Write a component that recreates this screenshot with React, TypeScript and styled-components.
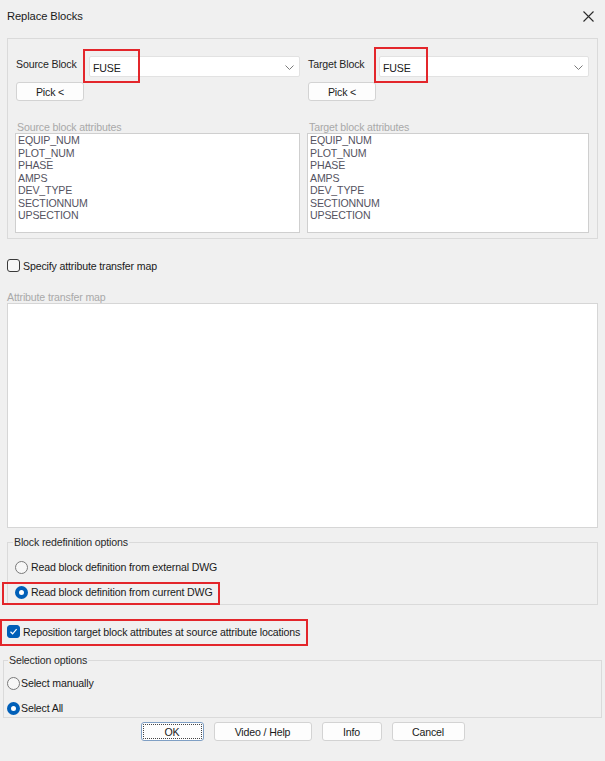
import styled, { createGlobalStyle } from 'styled-components';

const GlobalStyle = createGlobalStyle`
  html, body {
    margin: 0;
    padding: 0;
    background: #f0f0f0;
  }
  body {
    font-family: "Liberation Sans", Arial, sans-serif;
    font-size: 10.6px;
    letter-spacing: -0.15px;
    color: #1a1a1a;
  }
  * {
    box-sizing: border-box;
  }
`;

const sourceAttrs = [
  'EQUIP_NUM',
  'PLOT_NUM',
  'PHASE',
  'AMPS',
  'DEV_TYPE',
  'SECTIONNUM',
  'UPSECTION',
];

export default function App() {
  return (
    <Dialog>
      <GlobalStyle />
      <TitleBar>
        <Title>Replace Blocks</Title>
        <CloseBut aria-label="Close">
          <svg width="11" height="11" viewBox="0 0 11 11">
            <path d="M0.5 0.5 L10.5 10.5 M10.5 0.5 L0.5 10.5" stroke="#2b2b2b" strokeWidth="1.1" />
          </svg>
        </CloseBut>
      </TitleBar>

      <Body>
        <TopGroup>
          <BlockColumn>
            <ComboRow>
              <FieldLabel $w={62}>Source Block</FieldLabel>
              <ComboWrap>
                <Combo>
                  <span>FUSE</span>
                  <Chevron />
                </Combo>
                <RedMark $left={-6} $top={-7} $w={57} $h={34} />
              </ComboWrap>
            </ComboRow>
            <PickBut>Pick &lt;</PickBut>
            <GrayLabel>Source block attributes</GrayLabel>
            <AttrList>
              {sourceAttrs.map((a) => (
                <AttrItem key={a}>{a}</AttrItem>
              ))}
            </AttrList>
          </BlockColumn>

          <BlockColumn>
            <ComboRow>
              <FieldLabel $w={60}>Target Block</FieldLabel>
              <ComboWrap>
                <Combo>
                  <span>FUSE</span>
                  <Chevron />
                </Combo>
                <RedMark $left={-5} $top={-9} $w={54} $h={36} />
              </ComboWrap>
            </ComboRow>
            <PickBut>Pick &lt;</PickBut>
            <GrayLabel>Target block attributes</GrayLabel>
            <AttrList>
              {sourceAttrs.map((a) => (
                <AttrItem key={a}>{a}</AttrItem>
              ))}
            </AttrList>
          </BlockColumn>
        </TopGroup>

        <CheckRow $top={20}>
          <CheckBox />
          <span>Specify attribute transfer map</span>
        </CheckRow>

        <MapLabel>Attribute transfer map</MapLabel>
        <MapBox />

        <RedefGroup>
          <Legend>Block redefinition options</Legend>
          <OptionRow>
            <Radio />
            <span>Read block definition from external DWG</span>
          </OptionRow>
          <OptionRow>
            <Radio $on />
            <span>Read block definition from current DWG</span>
            <RedMark $left={-13} $top={-3} $w={218} $h={23} />
          </OptionRow>
        </RedefGroup>

        <CheckRow $top={20}>
          <CheckBox $on>
            <svg width="9" height="9" viewBox="0 0 9 9">
              <path d="M1.5 4.8 L3.6 6.8 L7.6 2.2" stroke="#fff" strokeWidth="1.2" fill="none" />
            </svg>
          </CheckBox>
          <span>Reposition target block attributes at source attribute locations</span>
          <RedMark $left={-7} $top={-6} $w={308} $h={27} />
        </CheckRow>

        <SelectGroup>
          <SelectLegend>Selection options</SelectLegend>
          <SelectRow>
            <Radio />
            <span>Select manually</span>
          </SelectRow>
          <SelectRow>
            <Radio $on />
            <span>Select All</span>
          </SelectRow>
        </SelectGroup>

        <ButtonBar>
          <DlgBut $w={63} $default>OK</DlgBut>
          <DlgBut $w={98}>Video / Help</DlgBut>
          <DlgBut $w={60}>Info</DlgBut>
          <DlgBut $w={73}>Cancel</DlgBut>
        </ButtonBar>
      </Body>
    </Dialog>
  );
}

function Chevron() {
  return (
    <svg width="9" height="5" viewBox="0 0 9 5">
      <path d="M0.5 0.5 L4.5 4.5 L8.5 0.5" stroke="#7a7a7a" strokeWidth="1" fill="none" />
    </svg>
  );
}

const Dialog = styled.div`
  width: 605px;
  height: 761px;
  background: #f0f0f0;
  overflow: hidden;
`;

const TitleBar = styled.div`
  height: 33px;
  display: flex;
  align-items: center;
  justify-content: space-between;
  padding: 0 11px 0 7px;
`;

const Title = styled.div`
  font-size: 11.2px;
  letter-spacing: -0.1px;
  color: #1a1a1a;
  margin-top: -1px;
`;

const CloseBut = styled.div`
  width: 11px;
  height: 11px;
  display: flex;
  margin-top: -1px;
`;

const Body = styled.div`
  padding: 0 7px;
`;

const TopGroup = styled.div`
  margin-top: 5px;
  height: 201px;
  border: 1px solid #dadada;
  padding: 17px 8px 5px 7px;
  display: grid;
  grid-template-columns: 285px 282px;
  column-gap: 7px;
`;

const BlockColumn = styled.div`
  display: flex;
  flex-direction: column;
  align-items: stretch;
`;

const ComboRow = styled.div`
  display: flex;
  align-items: flex-start;
  gap: 11px;
  height: 21px;
`;

const FieldLabel = styled.div<{ $w: number }>`
  width: ${(p) => p.$w}px;
  flex-shrink: 0;
  padding-top: 2px;
  line-height: 13px;
  color: #1f1f1f;
  margin-left: 1px;
  white-space: nowrap;
`;

const ComboWrap = styled.div`
  position: relative;
  flex: 1;
`;

const Combo = styled.div`
  height: 21px;
  background: #fff;
  border: 1px solid #e2e2e2;
  border-radius: 2px;
  display: flex;
  align-items: center;
  justify-content: space-between;
  padding: 2px 5px 0 3px;
  color: #1a1a1a;
`;

const RedMark = styled.div<{ $left: number; $top: number; $w: number; $h: number }>`
  position: absolute;
  left: ${(p) => p.$left}px;
  top: ${(p) => p.$top}px;
  width: ${(p) => p.$w}px;
  height: ${(p) => p.$h}px;
  border: 2px solid #e3262b;
  pointer-events: none;
`;

const PickBut = styled.div`
  margin: 5px 0 0 1px;
  width: 68px;
  height: 19px;
  background: #fdfdfd;
  border: 1px solid #d3d3d3;
  border-radius: 3px;
  display: flex;
  align-items: center;
  justify-content: center;
  color: #1a1a1a;
`;

const GrayLabel = styled.div`
  margin-top: 20px;
  height: 12px;
  line-height: 12px;
  padding-left: 2px;
  color: #a9a9a9;
`;

const AttrList = styled.div`
  height: 100px;
  background: #fff;
  border: 1px solid #cfcfcf;
  padding: 0 2px;
`;

const AttrItem = styled.div`
  height: 12.5px;
  line-height: 12.5px;
  color: #55535f;
`;

const CheckRow = styled.div<{ $top: number }>`
  position: relative;
  margin-top: ${(p) => p.$top}px;
  height: 13px;
  display: flex;
  align-items: center;
  gap: 3px;
  color: #1a1a1a;
`;

const CheckBox = styled.div<{ $on?: boolean }>`
  width: 13px;
  height: 13px;
  border-radius: 3px;
  border: 1px solid ${(p) => (p.$on ? '#005fb8' : '#3a3a3a')};
  background: ${(p) => (p.$on ? '#005fb8' : '#f7f7f7')};
  display: flex;
  align-items: center;
  justify-content: center;
  flex-shrink: 0;
`;

const MapLabel = styled.div`
  margin-top: 19px;
  height: 12px;
  line-height: 12px;
  color: #a9a9a9;
`;

const MapBox = styled.div`
  height: 225px;
  background: #fff;
  border: 1px solid #d6d6d6;
`;

const RedefGroup = styled.fieldset`
  margin: 7px 0 0;
  padding: 0 7px 5px 7px;
  border: 1px solid #dadada;
  min-width: 0;
`;

const Legend = styled.legend`
  padding: 0 1px;
  margin-left: -2px;
  line-height: 14px;
  color: #2a2a2a;
`;

const OptionRow = styled.div`
  position: relative;
  margin-top: 11px;
  height: 14px;
  display: flex;
  align-items: center;
  gap: 3px;
  color: #1a1a1a;
`;

const Radio = styled.div<{ $on?: boolean }>`
  width: 13px;
  height: 13px;
  border-radius: 50%;
  flex-shrink: 0;
  border: ${(p) => (p.$on ? '4px solid #005fb8' : '1px solid #7a7a7a')};
  background: ${(p) => (p.$on ? '#ffffff' : '#f7f7f7')};
`;

const SelectGroup = styled.fieldset`
  margin: 15px -4px 0;
  padding: 0 3px 2px 3px;
  border: 1px solid #dadada;
  min-width: 0;
`;

const SelectLegend = styled.legend`
  padding: 0 1px;
  margin-left: 1px;
  line-height: 14px;
  color: #2a2a2a;
`;

const SelectRow = styled.div`
  margin-top: 9px;
  height: 14px;
  display: flex;
  align-items: center;
  gap: 1px;
  color: #1a1a1a;

  & + & {
    margin-top: 11px;
  }
`;

const ButtonBar = styled.div`
  margin-top: 4px;
  display: flex;
  justify-content: center;
  gap: 10px;
`;

const DlgBut = styled.div<{ $w: number; $default?: boolean }>`
  width: ${(p) => p.$w}px;
  height: 19px;
  background: #fdfdfd;
  border: 1px solid ${(p) => (p.$default ? '#7f9fc4' : '#d3d3d3')};
  border-radius: 3px;
  display: flex;
  align-items: center;
  justify-content: center;
  color: #1a1a1a;
  outline: ${(p) => (p.$default ? '1px dotted #444' : 'none')};
  outline-offset: -3px;
`;
